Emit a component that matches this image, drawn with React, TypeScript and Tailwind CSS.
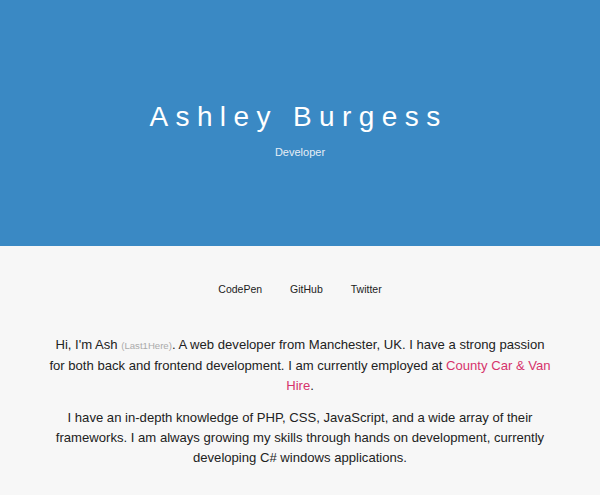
export default function App() {
  return (
    <div className="min-h-[495px] bg-[#f7f7f7] font-['Liberation_Sans',Arial,sans-serif]">
      <header className="flex h-[246px] flex-col items-center justify-center bg-[#3a89c4] text-white">
        <h1 className="mt-[18px] pr-[3px] text-[28px] leading-none tracking-[7.4px]">Ashley Burgess</h1>
        <p className="mt-[13px] text-[11px] text-[#e6eef6]">Developer</p>
      </header>
      <nav className="flex justify-center gap-[28px] pt-[36px] text-[10.5px] text-[#222]">
        <a href="#">CodePen</a>
        <a href="#">GitHub</a>
        <a href="#">Twitter</a>
      </nav>
      <main className="mx-auto mt-[37px] w-[506px] text-center text-[13.1px] leading-[20px] text-[#222]">
        <p>
          Hi, I'm Ash <span className="text-[9.6px] text-[#aaa]">(Last1Here)</span>. A web developer from Manchester, UK. I have a strong passion for both back and frontend development. I am currently employed at{' '}
          <a href="#" className="text-[#d6336c]">County Car &amp; Van Hire</a>.
        </p>
        <p className="mt-[12px]">
          I have an in-depth knowledge of PHP, CSS, JavaScript, and a wide array of their frameworks. I am always growing my skills through hands on development, currently developing C# windows applications.
        </p>
      </main>
    </div>
  )
}
